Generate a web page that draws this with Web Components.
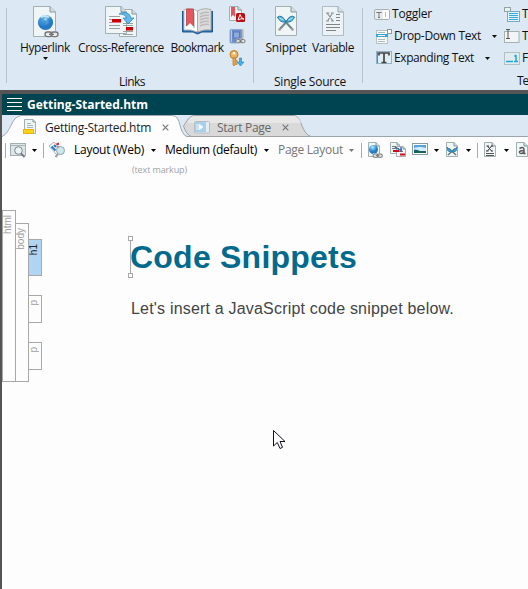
<!DOCTYPE html>
<html lang="en"><head><meta charset="utf-8"><title>Getting-Started.htm</title>
<style>html,body{margin:0;height:100%;overflow:hidden}body{font:12px/16px "Open Sans","Noto Sans",sans-serif;color:#111;background:#fdfdfd}</style></head>
<body><editor-app></editor-app>
<script>
const define=(name,html,setup)=>customElements.define(name,class extends HTMLElement{
  connectedCallback(){
    if(this.shadowRoot)return;
    const a=n=>this.getAttribute(n)||'';
    this.attachShadow({mode:'open'}).innerHTML=typeof html==='function'?html(a):html;
    if(setup)setup(this,a);
  }
});

const page=(w,h,f)=>`<path d="M.5 .5H${w-f}L${w-.5} ${f}V${h-.5}H.5Z" fill="#f0f5f6" stroke="#a3b0b3"/><path d="M${w-f} .5V${f}H${w-.5}" fill="#d2dcdf" stroke="#84979a"/>`;
const chain='<g fill="none" stroke="#777" stroke-width="1.4"><rect x="0" y="0" width="7" height="4.6" rx="2.3"/><rect x="6" y="0" width="7" height="4.6" rx="2.3"/><path d="M4 2.3H9"/></g>';
const defs=`<defs><radialGradient id="b" cx=".4" cy=".25"><stop offset="0" stop-color="#c2e9fd"/><stop offset=".5" stop-color="#5cb4ea"/><stop offset="1" stop-color="#2478c4"/></radialGradient></defs>`;
const icons={
 hyperlink:[28,32,page(23,31,6)+'<circle cx="12.500" cy="16.500" r="7.600" fill="url(#b)"/><path d="M6 14q2-4 6-3l-1 3 3 1-2 4q-4 1-5-2ZM15 12l3 2-1 3-3-2Z" fill="#2d7fc3" opacity=".6"/><path d="M8 11.500q4-3 8 0" stroke="#d7f1ff" stroke-width="2" opacity=".8" fill="none"/><g transform="translate(12 26)"><rect y="-1" width="13" height="6.500" rx="2" fill="#e8edf0"/>'+chain+'</g>'],
 xref:[32,32,`<g transform="translate(14 3)">${page(18,28,5)}</g>${page(22,28,6)}<path d="M4 10.500H15M4 13.500H7M4 16.500H7M4 19.500H15M4 22.500H15M18 17.500H28M18 19.500H28M18 25.500H28M18 28.500H28" stroke="#98a2a4"/><rect x="7" y="13" width="9" height="3.500" fill="#c00"/><rect x="21" y="21" width="7" height="3.500" fill="#c00"/><path d="M14 8q3-2.500 7-1.500 4 1 5 5.500h3l-6 6-5-6h3.500q-1-4-7.500-4z" fill="#62b7ed" stroke="#2a7eb9" stroke-width=".7"/>`],
 bookmark:[31,28,'<path d="M.5 3V24H11l4.500 2L20 24H30.500V3" fill="#286bb0" stroke="#1f5a97"/><path d="M2 1.500Q10-.5 15.500 3V24Q9 21 2 22Z" fill="#fff" stroke="#bbb"/><path d="M29 1.500Q21-.5 15.500 3V24Q22 21 29 22Z" fill="#ddd" stroke="#aaa"/><path d="M12 5V20M18 6Q22 3.500 27 4.500M18 9Q22 6.500 27 7.500M18 12Q22 9.500 27 10.500M18 15Q22 12.500 27 13.500M18 18Q22 15.500 27 16.500" stroke="#bbb" fill="none" stroke-width="1.500"/><path d="M4.500 1h7v17L8 14.500 4.500 18Z" fill="#e5585f" stroke="#b83d46" stroke-width=".8"/>'],
 pdf:[17,17,`${page(13,15,4)}<path d="M2 1h4v10L4 9l-2 2Z" fill="#e4565c"/><rect x="7" y="7" width="9" height="9" rx="1.500" fill="#bf0d12"/><path d="M9 14l2-5.500q1 4 4 4.500-3-1-6 1" fill="none" stroke="#fff"/>`],
 book:[17,17,'<rect x="3" y="1" width="12" height="13" fill="#dccb96"/><rect x="1" y="1.500" width="12" height="13.500" rx="1" fill="#6d8fc9" stroke="#8ba6d6"/><rect x="4.500" y="4" width="6" height="6" fill="#8eabdb" stroke="#587bb8"/><path d="M2.500 2V14" stroke="#b4c9ea"/><g transform="translate(7 11.500) scale(.7)"><rect y="-1" width="13" height="7" rx="2" fill="#dfe5ec"/>'+chain+'</g>'],
 key:[17,17,'<circle cx="5" cy="4.500" r="4" fill="#eeb35c" stroke="#b97d2c"/><circle cx="5" cy="3.200" r="1.200" fill="#fff"/><path d="M4 8h2.500v2H8v1.500H6.500V13H8v1.500H6.500L5 16 4 15Z" fill="#e5a44c" stroke="#b97d2c" stroke-width=".7"/><path d="M10.500 8h2v4h2.500l-3.500 4-3.500-4h2.500Z" fill="#45b0e6" stroke="#1e83bf" stroke-width=".6"/>'],
 snippet:[23,31,page(22,30,6)+'<path d="M4 24L15 12M18 24L7 12" stroke="#72868c" stroke-width="2"/><path d="M2.500 11Q7 8 11 16Q5 17 2.500 11ZM19.500 11Q15 8 11 16Q17 17 19.500 11Z" fill="#56b9e2" stroke="#267ba4"/><path d="M4.500 12l4 2M17.500 12l-4 2" stroke="#b8e8fb"/><circle cx="4.500" cy="23.500" r="1.300" fill="#aaa"/><circle cx="17.500" cy="23.500" r="1.300" fill="#aaa"/>'],
 variable:[23,31,'<g opacity=".8">'+page(22,30,6)+'</g><path d="M5 7l6 8M10.500 7L5.500 15M4 7h3.500M9 7h3M4 15h3M9 15h3" stroke="#8b9595" stroke-width="1.200"/><path d="M14 8.500H18M14 11.500H18M14 14.500H18M4 18.500H18M4 21.500H18M4 24.500H14" stroke="#7c8787" stroke-width="1.200"/>'],
 toggler:[17,13,'<rect x=".5" y="1.500" width="15" height="10" rx="1.500" fill="#e8ecec" stroke="#a9b0b0"/><rect x="9" y="2" width="6" height="9" fill="#fff"/><path d="M2.500 5V4.500H7.500V5M5 4.500V9M4 9.500H6" stroke="#777" fill="none"/><path d="M11.500 4V9" stroke="#bbb"/>'],
 dropdown:[17,15,'<rect x=".5" y="1.500" width="11" height="13" fill="#f7faf9" stroke="#b6c2c2"/><rect x="11.500" y=".5" width="4" height="4" fill="#fff" stroke="#8f9999"/><path d="M2 3.500H9M2 10.500H9M2 12.500H9" stroke="#a9bcc2"/><rect x="0" y="5" width="12" height="3" fill="#3ba2de"/><path d="M2 6.500H9" stroke="#fff"/>'],
 expand:[16,14,'<rect x=".5" y=".5" width="15" height="12" fill="#e0eff7" stroke="#8fb4c9"/><path d="M3 4.500V2H13V4.500M8 2V11.500M5.500 11.500H10.500" stroke="#444" stroke-width="1.700" fill="none"/><path d="M1.500 1V12" stroke="#3f8fc0"/>'],
 textlist:[16,15,'<rect x=".5" y=".5" width="6" height="4" fill="#e9f2f2" stroke="#94a4a5"/><rect x="3.500" y="4.500" width="12" height="10" fill="#e3f4fb" stroke="#79a9c0"/><path d="M5 6.500H14M5 8.500H14M5 10.500H14M5 12.500H14" stroke="#35a9df"/>'],
 textbox:[16,15,'<rect x=".5" y="2.500" width="14.500" height="11" fill="#f2f5f6" stroke="#a6b2b2"/><path d="M2 .5H6M4 1V9M2 9.500H6" stroke="#555"/>'],
 footnote:[16,13,'<rect x=".5" y=".5" width="15" height="12" fill="#dfecef" stroke="#b3c1c1"/><path d="M2 9.500H9M10 9.500H14M12 3V9M10.500 4.500L12 3" stroke="#20a5dc" stroke-width="1.500" fill="none"/>'],
 docfile:[16,17,`<g transform="translate(1)">${page(12,15,3)}</g><path d="M4 4.500H8M4 6.500H10M4 8.500H10" stroke="#a8b5b7"/><rect x=".5" y="10.500" width="10" height="4" fill="#ffd21a" stroke="#e8b500"/>`],
 start:[17,13,'<rect x=".5" y=".5" width="15" height="11.500" rx="1" fill="#e6edf1" stroke="#b3bdc3"/><rect x="1" y="1" width="11" height="10" fill="#a8d0ec"/><path d="M3 3V9M5 3v6l4-3Z" fill="#fff" stroke="#e9f5fc"/>'],
 preview:[17,15,'<rect x=".5" y=".500" width="15" height="12" fill="#dde5e6" stroke="#a3b0b3"/><path d="M1 2.500H15" stroke="#a9b5b7"/><circle cx="8.500" cy="7.500" r="3.800" fill="#edf3f4" stroke="#788a8e"/><path d="M11 10.500L14.500 14" stroke="#778" stroke-width="1.800"/>'],
 inspect:[17,16,'<path d="M0 4L5 0 13 9 8 13Z" fill="#f6f9fa" stroke="#aab6b9"/><path d="M7.500 2.500l2.500-1M8 6l2-1" stroke="#d23" stroke-width="2"/><path d="M2.500 4.500l4 4M5 3l2 2" stroke="#2a78c0" stroke-width="2"/><circle cx="11.500" cy="8.500" r="4" fill="#cfe7ef" stroke="#91a6ad"/><path d="M9 12l-2.500 3" stroke="#95a5ab" stroke-width="2"/>'],
 link:[16,17,page(12,15,4)+'<circle cx="5.500" cy="7.500" r="4.500" fill="url(#b)"/><g transform="translate(5 12) scale(.72)"><rect y="-1" width="13" height="7" fill="#e8eced"/>'+chain+'</g>'],
 smallxref:[17,16,`${page(10,12,3)}<g transform="translate(6 4)">${page(10,11,3)}</g><path d="M2 4.500H6M2 6.500H9M8 9.500H13" stroke="#777"/><path d="M5 5l5 3h2M11 10V5" stroke="#3467c0" stroke-width="1.400" fill="none"/><path d="M3 9H9M10 12.500H15" stroke="#d30d14" stroke-width="2.200"/>`],
 image:[16,14,'<rect x=".5" y=".5" width="15" height="11" fill="#fff" stroke="#8799a2"/><rect x="2" y="2" width="12" height="8" fill="#57a4dd"/><path d="M2 5Q8 3 14 5V8H2Z" fill="#d3efff"/><path d="M2 6.500Q6 6.500 8 8H14V10H2Z" fill="#18635f"/>'],
 smallsnip:[12,16,page(12,15,4)+'<path d="M2 13L9 6.500M10 13L3 6.500" stroke="#63777e" stroke-width="1.500"/><path d="M1 5l5 5-4-1ZM11 5L6 10l4-1Z" fill="#45a9d4" stroke="#2c87b4" stroke-width="1"/>'],
 smallvar:[12,16,page(12,15,4)+'<path d="M3.500 4l4 5M7.500 4L3.500 9M2.500 4H5M7 4H9M2 9H4.500M7 9H9" stroke="#333"/><path d="M2 11.500H10M2 13.500H10" stroke="#555"/>'],
 chara:[12,16,page(12,15,4)+'<path d="M3.500 6.500Q8 4 8 8V11.500H9.500M8 8.500Q3 8.500 3.500 10.500Q4.500 12.500 8 10.500" fill="none" stroke="#555" stroke-width="1.500"/>'],
 arrow:[5,3,'<path d="M0 0H5L2.500 3Z" fill="currentColor"/>'],
 close:[7,7,'<path d="M.7.7L6.300 6.300M6.300.7L.7 6.300" stroke="#777" stroke-width="1.200"/>'],
 menu:[15,13,'<path d="M0 .5H15M0 4.500H15M0 8.500H15M0 12.500H15" stroke="#fff"/>'],
 pointer:[13,20,'<path d="M.5.5V16L4.300 12.500 7 18.500 9.500 17.300 7 11.500H12Z" fill="#fff" stroke="#112"/>'],
 range:[5,42,'<path d="M2.500 4V38" stroke="#a8a8a8"/><rect x=".5" y=".5" width="4" height="4" fill="#fff" stroke="#a8a8a8"/><rect x=".5" y="37.500" width="4" height="4" fill="#fff" stroke="#a8a8a8"/>']
};
define('ui-icon',a=>{const [w,h,s]=icons[a('name')];return `<style>:host{display:block;flex:none;width:${w}px;height:${h}px}svg{display:block}</style><svg width="${w}" height="${h}">${defs}${s}</svg>`});

/* Label whose tracking adapts to a requested width. */
define('fit-text','<style>:host{display:block;flex:none;white-space:nowrap}span{display:inline-block}</style><span><slot></slot></span>',(el,a)=>{
  const s=el.shadowRoot.querySelector('span'),w=+a('w');
  el.style.width=w+'px';
  s.style.letterSpacing=(w-s.getBoundingClientRect().width)/el.textContent.length+'px';
});
define('ribbon-button',a=>`<style>:host{display:flex;flex-direction:column;align-items:center;flex:none;width:${a('w')}px;height:66px}.i{height:35px;display:flex;align-items:center;padding-left:${a('shift')||0}px;margin-bottom:1px}.a{margin-top:1px}</style><div class="i"><ui-icon name="${a('icon')}"></ui-icon></div><fit-text w="${a('tw')}">${a('label')}</fit-text>${a('menu')?'<ui-icon class="a" name="arrow"></ui-icon>':''}`);
define('ribbon-row',a=>`<style>:host{display:flex;align-items:center;height:22px;padding-left:${a('pad')||0}px;gap:2px}.i{width:16px;flex:none}.a{margin-left:${a('gap')||9}px}</style><div class="i"><ui-icon name="${a('icon')}"></ui-icon></div><fit-text w="${a('tw')}">${a('label')}</fit-text>${a('menu')?'<ui-icon class="a" name="arrow"></ui-icon>':''}`);
define('ribbon-group',a=>`<style>:host{box-sizing:border-box;display:flex;flex-direction:column;flex:none;width:${a('w')}px;height:75px;border-left:1px solid #b5c3d1}.b{display:flex;height:66px;margin-top:-4px;padding-left:${a('pad')}px}.l{padding-left:${a('lp')}px;margin-top:4px}</style><div class="b"><slot></slot></div><div class="l"><fit-text w="${a('tw')}">${a('label')}</fit-text></div>`);
define('app-ribbon',`<style>:host{display:flex;height:90px;box-sizing:border-box;padding:8px 0 0 6px;background:#dde8f5;overflow:hidden}.s{display:flex;flex-direction:column;gap:5px;padding:2px 0 0 3px}.r{display:flex;flex:none;flex-direction:column;margin-top:-1px}.c{width:130px}</style>
<ribbon-group w="247" pad="9" lp="112" tw="26" label="Links"><ribbon-button w="58" tw="50" shift="3" icon="hyperlink" label="Hyperlink" menu="1"></ribbon-button><ribbon-button w="94" tw="86" icon="xref" label="Cross-Reference"></ribbon-button><ribbon-button w="58" tw="53" icon="bookmark" label="Bookmark"></ribbon-button><div class="s"><ui-icon name="pdf"></ui-icon><ui-icon name="book"></ui-icon><ui-icon name="key"></ui-icon></div></ribbon-group>
<ribbon-group w="109" pad="7" lp="20" tw="72" label="Single Source"><ribbon-button w="50" tw="41" icon="snippet" label="Snippet"></ribbon-button><ribbon-button w="44" tw="42" icon="variable" label="Variable"></ribbon-button></ribbon-group>
<ribbon-group w="180" pad="11" lp="154" tw="11" label="Te"><div class="r c"><ribbon-row icon="toggler" tw="40" label="Toggler"></ribbon-row><ribbon-row pad="2" icon="dropdown" tw="87" label="Drop-Down Text" menu="1"></ribbon-row><ribbon-row pad="2" gap="9" icon="expand" tw="80" label="Expanding Text" menu="1"></ribbon-row></div><div class="r"><ribbon-row icon="textlist" tw="13" label="To"></ribbon-row><ribbon-row icon="textbox" tw="12" label="Te"></ribbon-row><ribbon-row icon="footnote" tw="6" label="F"></ribbon-row></div></ribbon-group>`);
define('title-bar','<style>:host{display:flex;align-items:center;height:21px;box-sizing:border-box;padding-left:5px;gap:5px;background:#004351;color:#fff;font-weight:700}</style><ui-icon name="menu"></ui-icon><fit-text w="115"><slot></slot></fit-text>');
define('doc-tab',a=>{const active=a('active');return `<style>:host{display:grid;flex:none;width:${active?184:128}px;height:22px;${active?'z-index:1':'margin-left:-3px'}}svg,.t{grid-area:1/1}.t{display:flex;align-items:center;padding:3px 0 0 ${active?21:11}px;color:${active?'#222':'#666'}}.i{width:${active?22:23}px}.x{margin-left:11px}</style><svg width="${active?185:128}" height="22">${active?'<path d="M0 21.500C9 18 9 1.500 19 .5H170C180 .5 176 21.500 186 22L0 22Z" fill="#fdfdfd"/><path d="M0 21.500C9 18 9 1.500 19 .5H170C180 .5 176 18 185 21.500" fill="none" stroke="#a2a9ae"/>':'<path d="M.5 11C4 6 6 .5 12 .5H111C119 .5 118 19 128 21.500H8Q3 19 .5 11Z" fill="#d9d9d9" stroke="#9ea2a5"/><path d="M7 3Q9 1 12 1H111Q116 2 118 8H4Z" fill="#e7e7e7"/>'}</svg><div class="t"><div class="i"><ui-icon name="${a('icon')}"></ui-icon></div><fit-text w="${a('tw')}">${a('label')}</fit-text><ui-icon class="x" name="close"></ui-icon></div>`});
define('tab-strip','<style>:host{display:flex;height:22px;background:linear-gradient(#9aa6ae,#9aa6ae) 0 21px/100% 1px no-repeat #dde8f5}</style><doc-tab active="1" icon="docfile" tw="106" label="Getting-Started.htm"></doc-tab><doc-tab icon="start" tw="54" label="Start Page"></doc-tab>');
define('tool-cell',a=>`<style>:host{display:block;flex:none;width:${a('w')}px}i{display:block;height:15px;border-left:1px solid #aaa}</style>${a('sep')?'<i></i>':'<slot></slot>'}`);
const tools=[['|',5],['preview',22],['arrow',11],['|',6],['inspect',25],['Layout (Web)',77,70],['arrow',14],['Medium (default)',99,92],['arrow',14],['Page Layout',71,65],['arrow',12,0,1],['|',7],['link',22],['smallxref',22],['image',22],['arrow',12],['smallsnip',20],['arrow',11],['|',7],['smallvar',20],['arrow',12],['chara',12]];
define('format-bar',`<style>:host{display:flex;align-items:center;height:26px;padding-left:3px;overflow:hidden;color:#000}.g{color:#777}</style>${tools.map(([n,w,t,g])=>n==='|'?`<tool-cell sep="1" w="${w}"></tool-cell>`:`<tool-cell w="${w}" class="${g||n==='Page Layout'?'g':''}">${t?`<fit-text w="${t}">${n}</fit-text>`:`<ui-icon name="${n}"></ui-icon>`}</tool-cell>`).join('')}`);
define('tag-bar',a=>`<style>:host{display:block;box-sizing:border-box;width:14px;flex:none;height:${a('h')}px;margin-top:${a('mt')||0}px;border:1px solid #a8a8a8;background:${a('on')?'#b0d4f1':'#fdfdfd'};color:${a('on')?'#222':'#a0a0a0'};font:10px/9px "Liberation Sans",sans-serif;overflow:hidden}span{display:block;writing-mode:vertical-rl;transform:rotate(180deg);margin:4px 0 0 0;height:max-content;width:9px}</style><span><slot></slot></span>`);
define('structure-bars','<style>:host{display:flex;width:40px;height:172px;margin-top:47px}tag-bar,div{margin-right:-1px}div{display:flex;flex-direction:column}</style><tag-bar h="172">html</tag-bar><tag-bar h="159" mt="13">body</tag-bar><div><tag-bar h="37" mt="29" on="1">h1</tag-bar><tag-bar h="28" mt="19">p</tag-bar><tag-bar h="28" mt="19">p</tag-bar></div>');
define('document-page',`<style>:host{display:flex;flex:1;position:relative;font-family:"Liberation Sans",Arial,sans-serif}.d{margin-left:88px}.m{font:9px/12px "Open Sans",sans-serif;color:#a3a3a3;margin:1px 0 0 2px}h1{font-size:32px;line-height:40px;color:#036a8c;margin:61px 0 0}p{font-size:16px;line-height:20px;color:#444;margin:22px 0 0 1px}.p,.r{position:absolute}.p{left:271px;top:267px}.r{left:126px;top:73px}</style><structure-bars></structure-bars><article class="d"><div class="m"><fit-text w="55">(text markup)</fit-text></div><h1><fit-text w="227">Code Snippets</fit-text></h1><p><fit-text w="323">Let's insert a JavaScript code snippet below.</fit-text></p></article><ui-icon class="r" name="range"></ui-icon><ui-icon class="p" name="pointer"></ui-icon>`);
define('editor-app','<style>:host{display:flex;flex-direction:column;width:528px;height:589px;overflow:hidden}main{flex:1;display:flex;flex-direction:column;border:solid #555;border-width:4px 0 0 2px;min-width:0}</style><app-ribbon></app-ribbon><main><title-bar>Getting-Started.htm</title-bar><tab-strip></tab-strip><format-bar></format-bar><document-page></document-page></main>');
</script></body></html>
